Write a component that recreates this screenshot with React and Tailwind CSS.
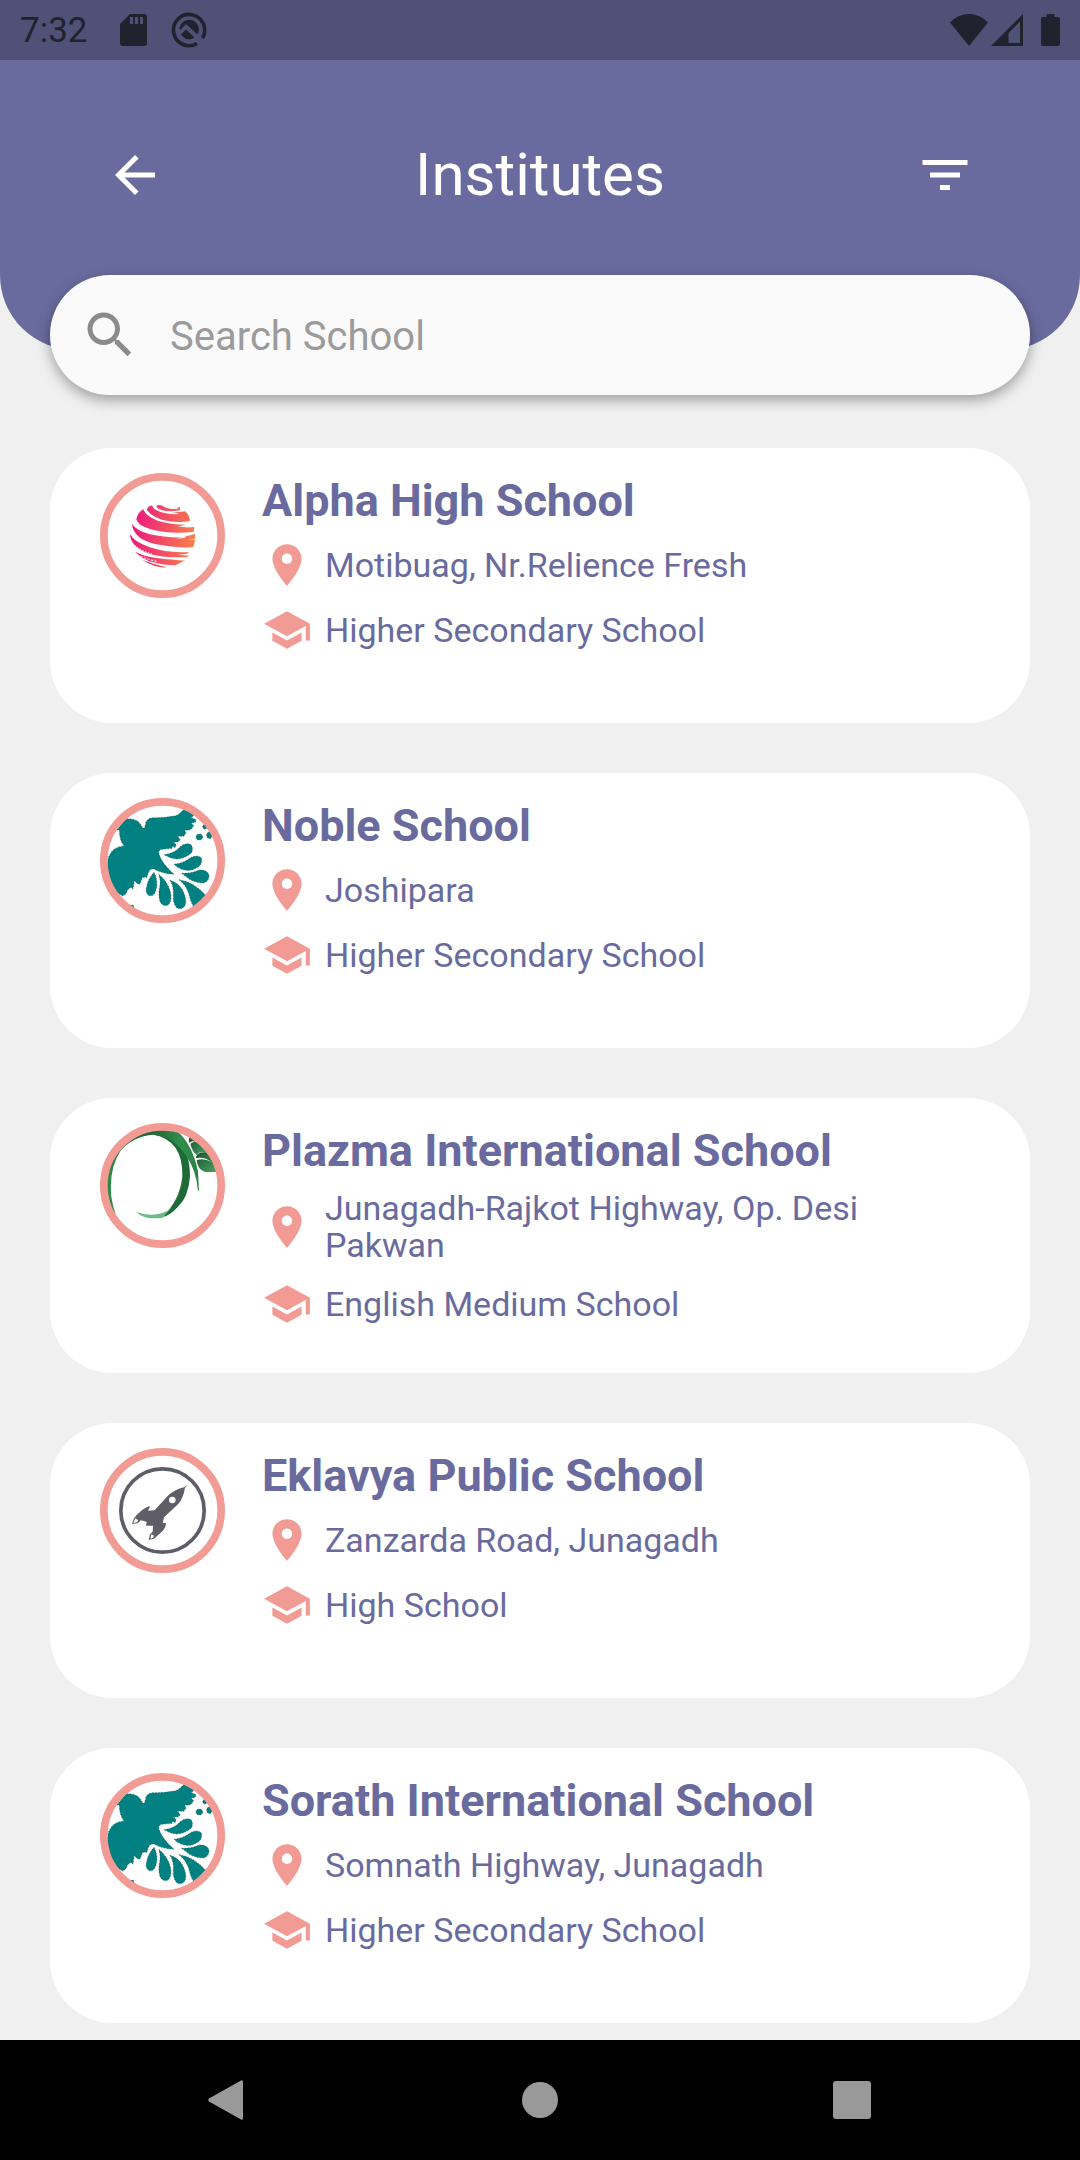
import React from "react";

function GlobeArt() {
  return (
    <>
      <defs>
        <linearGradient id="globe" gradientUnits="userSpaceOnUse" x1="130" y1="210" x2="315" y2="235">
          <stop offset="0" stopColor="#ec1b7c" />
          <stop offset="1" stopColor="#f97f4b" />
        </linearGradient>
      </defs>
      <g fill="url(#globe)">
        <path d="M199 137Q208 133 217 137Q226 146 262 148L264 142H270V151Q240 157 218 151Q200 147 199 137Z" />
        <path d="M170 149Q174 139 186 136Q188 150 220 158Q250 164 268 162Q250 158 242 157Q268 158 285 154Q299 165 300 183Q275 188 238 184Q188 175 170 149Z" />
        <path d="M139 178Q143 157 160 148Q165 168 203 182Q245 194 287 194Q275 198 262 199Q290 204 312 201V215Q270 221 225 216Q147 206 139 178Z" />
        <path d="M126 191Q139 212 180 223Q225 234 290 232L258 235Q290 237 288 228Q302 226 315 221V237L290 238L315 240Q314 252 309 262Q250 264 200 253Q130 238 126 191Z" />
        <path d="M120 222Q132 246 180 262Q230 280 298 276L290 282L262 284L298 287L290 291Q230 294 188 284Q122 266 120 222Z" />
        <path d="M135 275Q162 289 200 294L240 299L220 295Q260 302 286 301L256 316Q220 316 190 307Q153 297 135 275Z" />
        <path d="M156 299Q190 312 230 322Q200 326 156 299Z" />
      </g>
      <path d="M128 250Q150 272 186 281" stroke="#fff" strokeWidth="3" strokeDasharray="4 5" fill="none" />
      <path d="M142 284Q165 297 200 304" stroke="#fff" strokeWidth="3" strokeDasharray="7 4" fill="none" />
    </>
  );
}

function BirdArt() {
  return (
    <g fill="#008080" stroke="#0b3b3b" strokeWidth="1.5" strokeDasharray="4 5">
      <path d="M80 135L108 102Q130 99 143 109Q154 118 158 129L163 130Q166 122 168 111Q174 98 190 98Q222 99 245 94Q264 92 271 83L283 72L304 82Q314 88 310 94L302 97L318 104L316 112L303 115L311 121L305 131L296 136L284 135L288 144L281 154L262 154L271 164L264 171H250L258 178L256 188L247 183V190Q230 192 215 193Q203 196 207 208Q216 236 252 268Q215 265 190 251L180 254L174 265L171 277L158 277L150 297L142 296L133 287L129 312L122 307L112 316Q110 328 98 333Q80 325 62 300Q44 250 56 215Q68 185 102 183Q88 165 88 135Z" />
      <path d="M222 209Q252 206 270 186Q285 172 302 178Q311 188 305 203Q285 221 260 222Q240 220 222 209Z" />
      <path d="M252 238Q280 235 300 219Q320 208 334 218Q339 233 325 246Q300 262 275 253Q262 249 252 238Z" />
      <path d="M275 265Q305 266 325 256Q350 252 357 270Q358 290 340 294Q308 294 286 273Z" />
      <path d="M267 284Q312 290 350 334L312 368Q301 350 296 325Q288 300 267 284Z" />
      <path d="M240 286Q265 292 279 318Q292 345 285 362Q275 376 260 368Q248 355 250 330Q252 305 240 286Z" />
      <path d="M206 268Q234 290 242 325Q246 350 234 360Q220 366 210 350Q204 330 209 305Q213 290 206 268Z" />
      <path d="M192 262Q206 290 198 315Q192 335 178 332Q164 325 170 305Q175 280 192 262Z" />
      <ellipse cx="328" cy="156" rx="10" ry="9" />
      <ellipse cx="358" cy="151" rx="8" ry="10" />
      <circle cx="345" cy="125" r="7" />
      <circle cx="126" cy="366" r="6" />
    </g>
  );
}

function LeafArt() {
  return (
    <>
      <defs>
        <linearGradient id="leaf" x1="0" y1="0" x2="1" y2="1">
          <stop offset="0" stopColor="#14532b" />
          <stop offset="1" stopColor="#4ea566" />
        </linearGradient>
        <linearGradient id="hoop" gradientUnits="userSpaceOnUse" x1="60" y1="200" x2="325" y2="200">
          <stop offset="0" stopColor="#2b8a48" />
          <stop offset="0.45" stopColor="#1c6434" />
          <stop offset="0.8" stopColor="#2f8e4c" />
          <stop offset="1" stopColor="#2a8245" />
        </linearGradient>
      </defs>
      <path fill="#1f6b38" d="M190 74Q215 55 262 80Q300 125 300 200Q295 262 264 290Q240 317 215 322Q268 275 277 200Q280 90 190 74Z" />
      <path fill="url(#hoop)" d="M74 314Q50 265 50 215Q60 120 122 78Q200 40 262 64Q308 105 324 185L327 242H324Q318 180 292 143Q250 76 190 74Q130 78 92 122Q56 175 64 260Q68 290 78 316Z" />
      <path fill="#6fbb88" d="M138 306Q158 324 185 325H216Q264 280 279 210Q264 278 232 302Q190 324 138 306Z" />
      <path fill="url(#leaf)" d="M297 98V84L305 82L318 92Q306 92 297 98ZM301 101L314 94Q342 104 354 128Q325 122 321 136Q306 124 301 101Z" />
      <path fill="url(#leaf)" d="M318 140Q325 124 348 127L375 142L384 186H345Q322 178 320 150Q345 144 364 156Q345 140 318 144Z" />
    </>
  );
}

function RocketArt() {
  return (
    <>
      <circle cx="217.5" cy="226.5" r="125" fill="none" stroke="#5f5e68" strokeWidth="11" />
      <path fill="#5f5e68" d="M292 149L285 158Q280 190 264 208L222 247L218 264L228 264Q227 282 212 293L192 311L176 315L180 298L188 290L189 272H168L170 260L152 256L144 264L126 267L132 250Q150 226 176 214L180 215L174 227L194 226L230 186Q250 165 282 157Z" />
      <circle cx="247" cy="195" r="10" fill="#fff" />
      <path d="M130 264L136 250L144 255L142 261ZM181 311L184 298L192 302L189 309Z" fill="#fff" />
    </>
  );
}

const ART = { globe: GlobeArt, bird: BirdArt, leaf: LeafArt, rocket: RocketArt };

function Logo({ kind }) {
  const Art = ART[kind];
  return (
    <svg viewBox="30 39 375 375" className="size-[125px] shrink-0" aria-hidden="true">
      <clipPath id="disc">
        <circle cx="217.5" cy="226.5" r="176" />
      </clipPath>
      <circle cx="217.5" cy="226.5" r="176" fill="#fff" />
      <g clipPath="url(#disc)">
        <Art />
      </g>
      <circle cx="217.5" cy="226.5" r="176" fill="none" stroke="#f29a94" strokeWidth="23" />
    </svg>
  );
}

function Icon({ d, className }) {
  return (
    <svg viewBox="0 0 24 24" fill="currentColor" className={className} aria-hidden="true">
      <path d={d} />
    </svg>
  );
}

const ICONS = {
  back: "M20 11H7.83l5.59-5.59L12 4l-8 8 8 8 1.41-1.41L7.83 13H20v-2z",
  filter: "M10 18h4v-2h-4v2zM3 6v2h18V6H3zm3 7h12v-2H6v2z",
  search:
    "M15.5 14h-.79l-.28-.27C15.41 12.59 16 11.11 16 9.5 16 5.91 13.09 3 9.5 3S3 5.91 3 9.5 5.91 16 9.5 16c1.61 0 3.09-.59 4.23-1.57l.27.28v.79l5 4.99L20.49 19l-4.99-5zm-6 0C7.01 14 5 11.99 5 9.5S7.01 5 9.5 5 14 7.01 14 9.5 11.99 14 9.5 14z",
  place:
    "M12 2C8.13 2 5 5.13 5 9c0 5.25 7 13 7 13s7-7.75 7-13c0-3.87-3.13-7-7-7zm0 9.5c-1.38 0-2.5-1.12-2.5-2.5s1.12-2.5 2.5-2.5 2.5 1.12 2.5 2.5-1.12 2.5-2.5 2.5z",
  school: "M5 13.18v4L12 21l7-3.82v-4L12 17l-7-3.82zM12 3L1 9l11 6 9-4.91V17h2V9L12 3z",
};

const SCHOOLS = [
  { name: "Alpha High School", place: "Motibuag, Nr.Relience Fresh", type: "Higher Secondary School", logo: "globe" },
  { name: "Noble School", place: "Joshipara", type: "Higher Secondary School", logo: "bird" },
  { name: "Plazma International School", place: "Junagadh-Rajkot Highway, Op. Desi Pakwan", type: "English Medium School", logo: "leaf" },
  { name: "Eklavya Public School", place: "Zanzarda Road, Junagadh", type: "High School", logo: "rocket" },
  { name: "Sorath International School", place: "Somnath Highway, Junagadh", type: "Higher Secondary School", logo: "bird" },
];

function StatusBar() {
  return (
    <div className="flex h-[60px] items-center justify-between bg-[#505176] px-5 text-[#22212e]">
      <div className="flex items-center">
        <span className="pt-0.5 text-[35px] leading-[40px]">7:32</span>
        <svg viewBox="0 0 27 32" className="ml-8 h-8 w-[27px]" aria-hidden="true">
          <path fill="currentColor" fillRule="evenodd" d="M10 0H24Q27 0 27 3V29Q27 32 24 32H3Q0 32 0 29V10ZM10 3V10H13V3ZM15 3V10H18V3ZM20 3V10H23V3Z" />
        </svg>
        <svg viewBox="0 0 36 36" className="ml-6 size-9" aria-hidden="true">
          <path d="M26 31.5A15.6 15.6 0 1 1 31.500 26" fill="none" stroke="currentColor" strokeWidth="3.6" />
          <path fill="currentColor" d="M8.500 17A9.700 9.700 0 1 1 26.500 22.500L15 12L10 17.500ZM15 17.500L23.500 25.500Q16.500 30 11 24L10 22.500Z" />
          <path d="M27 25L31 29" fill="none" stroke="#505176" strokeWidth="2" />
        </svg>
      </div>
      <div className="flex items-center">
        <svg viewBox="0 0 38 32" className="h-8 w-[38px]" aria-hidden="true">
          <path fill="currentColor" d="M0 8.500Q8 0 19 0T38 8.500L19 32Z" />
        </svg>
        <svg viewBox="0 0 32 32" className="ml-[3px] size-8" aria-hidden="true">
          <path fill="currentColor" fillRule="evenodd" d="M32 0V32H0ZM29 7.500L17.500 19V29H29Z" />
        </svg>
        <svg viewBox="0 0 19 32" className="ml-[18px] h-8 w-[19px]" aria-hidden="true">
          <path fill="currentColor" d="M5.500 0H13.500V3H17Q19 3 19 5V30Q19 32 17 32H2Q0 32 0 30V5Q0 3 2 3H5.500Z" />
        </svg>
      </div>
    </div>
  );
}

function Detail({ icon, children }) {
  return (
    <div className="flex items-center gap-[13px]">
      <Icon d={ICONS[icon]} className="size-[50px] shrink-0 text-[#f29a94]" />
      <p className="text-[34px] leading-[37px]">{children}</p>
    </div>
  );
}

function SchoolCard({ school }) {
  return (
    <li className="flex min-h-[275px] items-start gap-[37px] rounded-[62px] bg-white px-[50px] py-[25px] text-[#696b9e]">
      <Logo kind={school.logo} />
      <div className="min-w-0 flex-1">
        <h2 className="text-[45px] leading-[55px] font-bold">{school.name}</h2>
        <div className="mt-3 flex flex-col gap-[15px]">
          <Detail icon="place">{school.place}</Detail>
          <Detail icon="school">{school.type}</Detail>
        </div>
      </div>
    </li>
  );
}

export default function App() {
  return (
    <div className="flex min-h-screen flex-col bg-[#f0f0f0] font-[Roboto,sans-serif]">
      <header className="rounded-b-[75px] bg-[#696b9e] pb-[115px] text-white">
        <StatusBar />
        <div className="mt-[55px] flex items-center justify-between px-[75px]">
          <button type="button" aria-label="Back" className="flex size-[120px] items-center justify-center">
            <Icon d={ICONS.back} className="size-[60px]" />
          </button>
          <h1 className="text-[60px] leading-[70px]">Institutes</h1>
          <button type="button" aria-label="Filter" className="flex size-[120px] items-center justify-center">
            <Icon d={ICONS.filter} className="size-[60px]" />
          </button>
        </div>
      </header>

      <main className="flex-1 px-[50px] pb-4">
        <label className="relative -mt-[75px] flex h-[120px] items-center gap-[30px] rounded-full bg-[#fafafa] px-[30px] shadow-[0_5px_14px_rgba(0,0,0,0.35)]">
          <Icon d={ICONS.search} className="size-[60px] shrink-0 text-[#8b8b8b]" />
          <input
            type="text"
            aria-label="Search School"
            placeholder="Search School"
            className="min-w-0 flex-1 bg-transparent pt-1 text-[40px] leading-[48px] text-[#696b9e] outline-none placeholder:text-[#9b9b9b]"
          />
        </label>
        <ul className="mt-[53px] flex flex-col gap-[50px]">
          {SCHOOLS.map((school) => (
            <SchoolCard key={school.name} school={school} />
          ))}
        </ul>
      </main>

      <nav className="flex h-[120px] shrink-0 items-center justify-around bg-black px-[72px] text-[#999999]">
        <button type="button" aria-label="Back">
          <svg viewBox="0 0 40 40" className="size-10" fill="currentColor" aria-hidden="true">
            <path d="M33 .5Q35 -.5 35 2V38Q35 40.500 33 39.500L1 21.500Q-.5 20 1 18.500Z" />
          </svg>
        </button>
        <button type="button" aria-label="Home">
          <svg viewBox="0 0 40 40" className="size-10" fill="currentColor" aria-hidden="true">
            <circle cx="20" cy="20" r="18" />
          </svg>
        </button>
        <button type="button" aria-label="Recent apps">
          <svg viewBox="0 0 40 40" className="size-10" fill="currentColor" aria-hidden="true">
            <rect x="1" y="1" width="38" height="38" rx="3" />
          </svg>
        </button>
      </nav>
    </div>
  );
}
